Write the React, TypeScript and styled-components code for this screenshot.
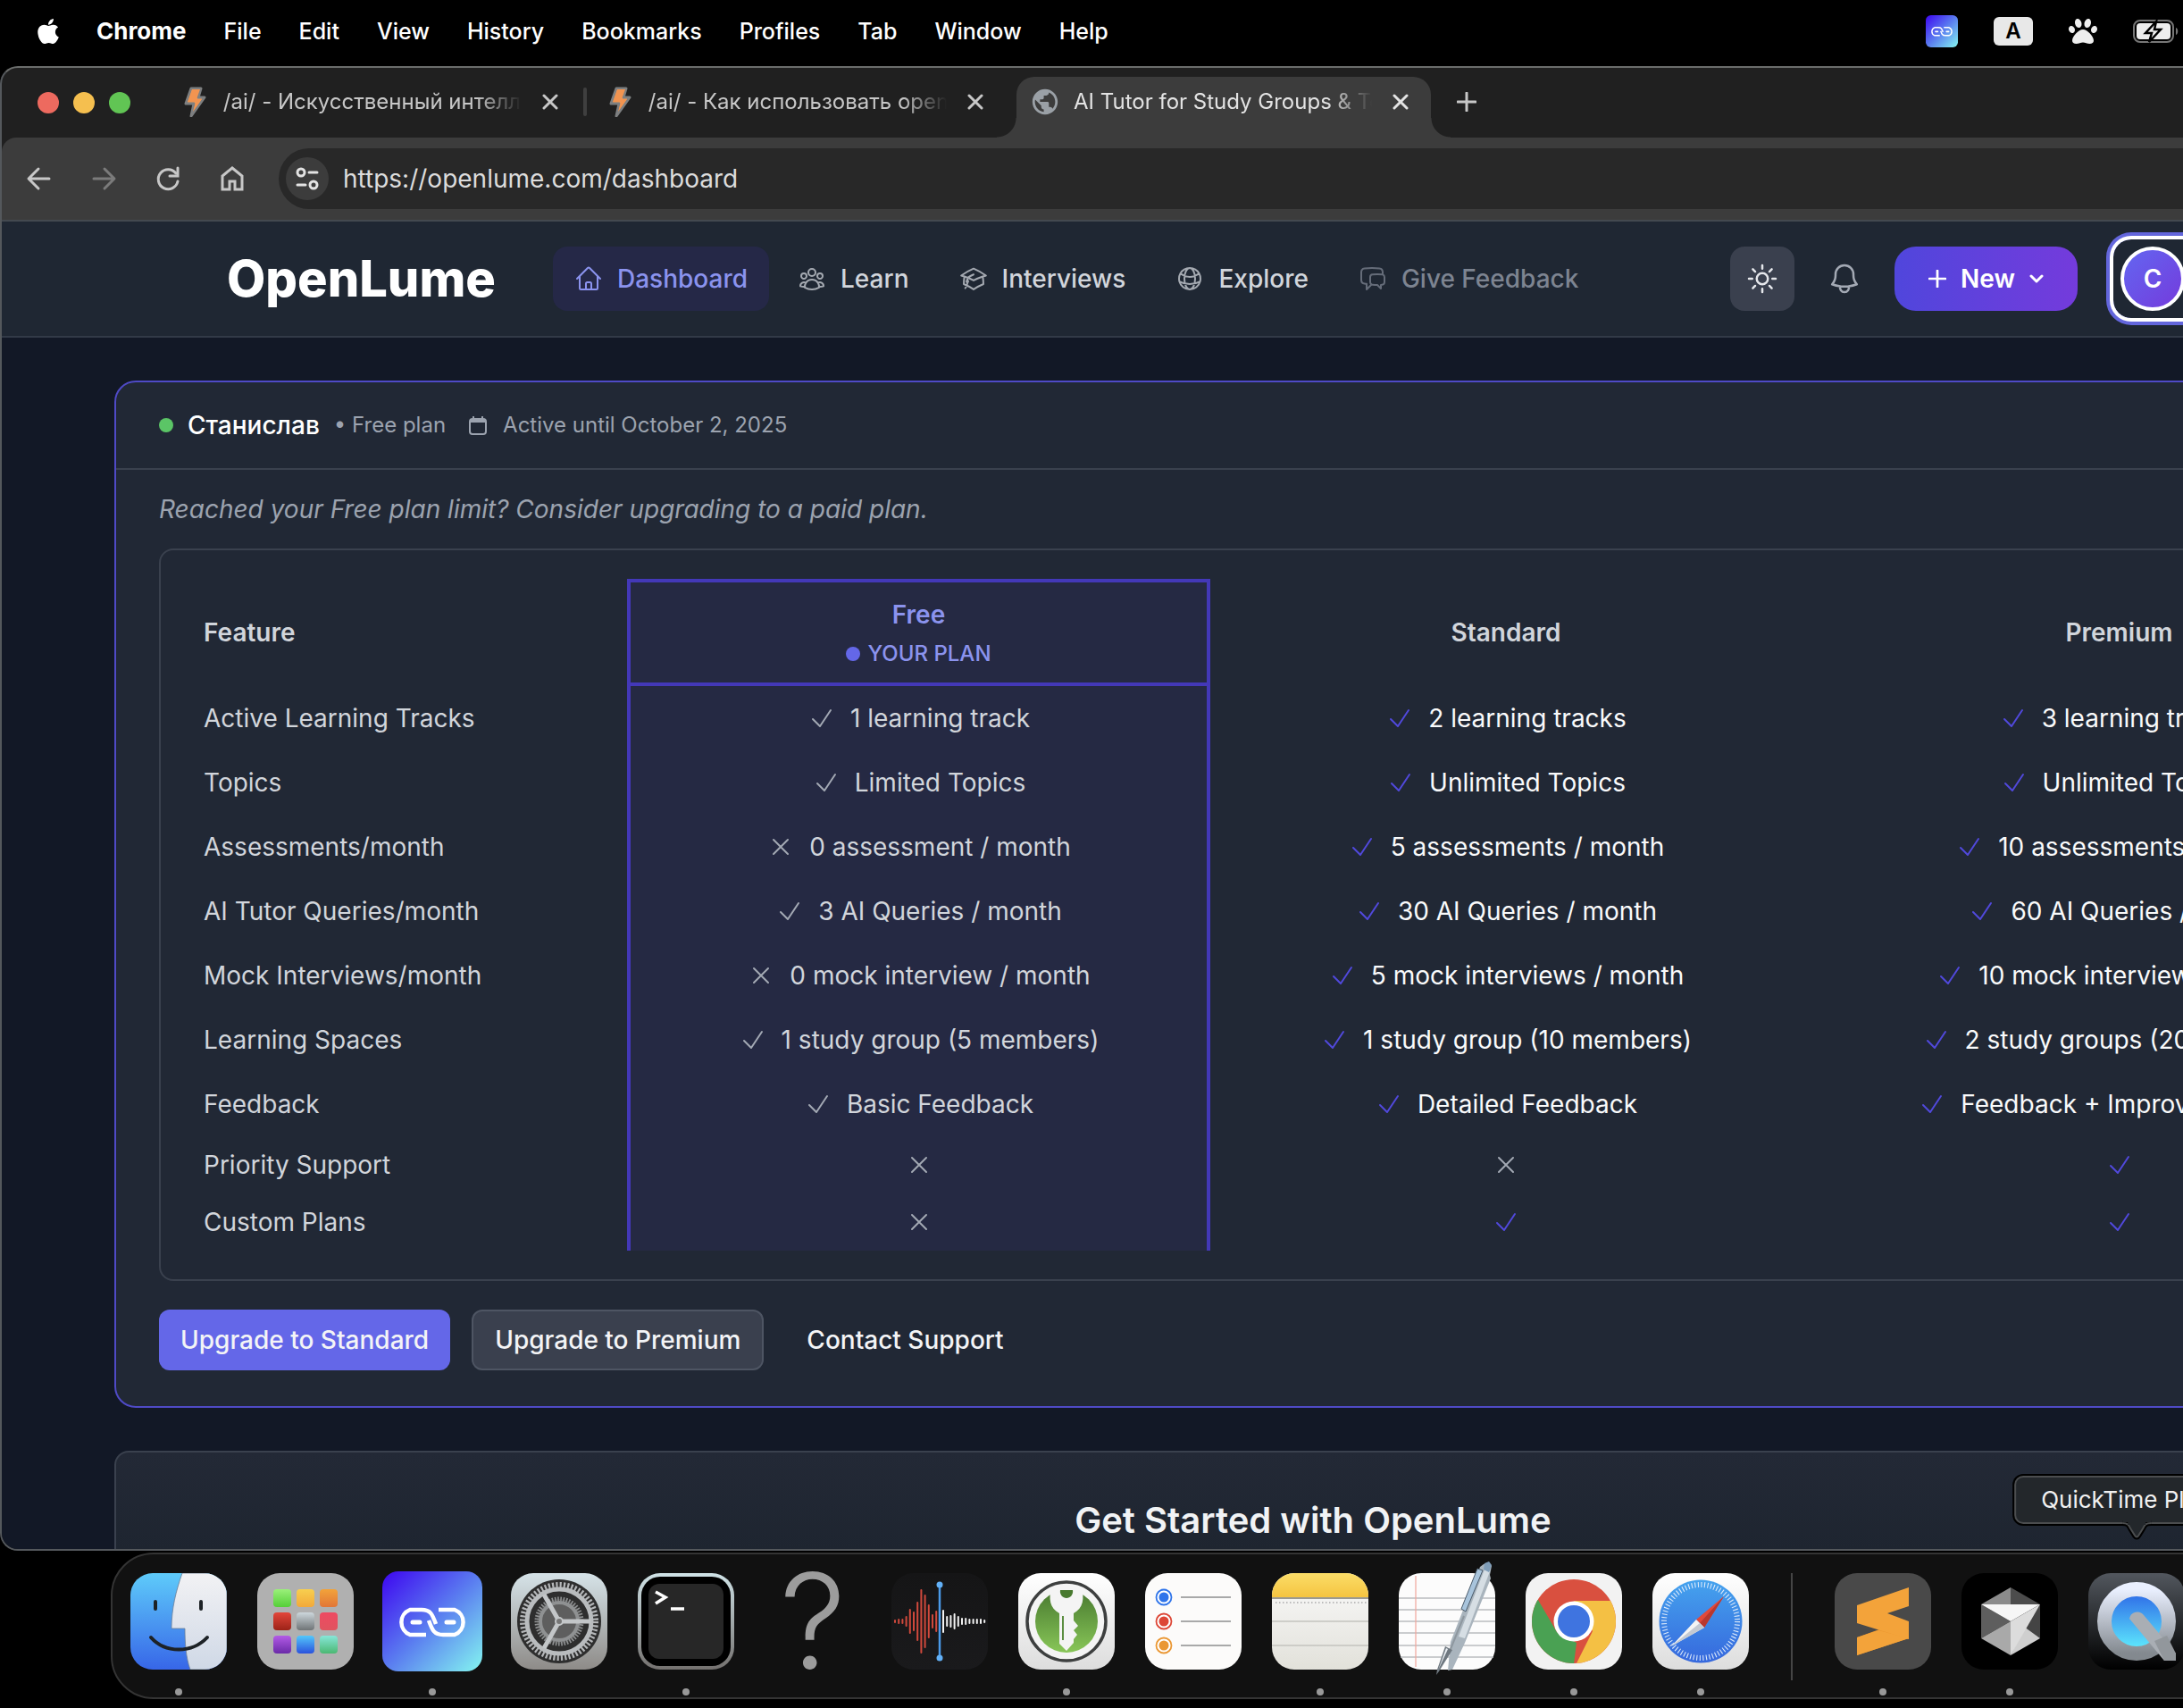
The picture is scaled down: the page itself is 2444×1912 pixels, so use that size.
import React from "react";
import styled, { createGlobalStyle, css } from "styled-components";
import { FaApple, FaPaw } from "react-icons/fa";
import { MdPublic } from "react-icons/md";
import {
  HiOutlineHome,
  HiOutlineUserGroup,
  HiOutlineAcademicCap,
  HiOutlineGlobeAlt,
  HiOutlineChatBubbleLeftRight,
  HiOutlineSun,
  HiOutlineBell,
  HiOutlineCheck,
  HiOutlineXMark,
} from "react-icons/hi2";

const GlobalStyle = createGlobalStyle`
  *, *::before, *::after { box-sizing: border-box; }
  body {
    margin: 0;
    background: #000;
    color: #fff;
    font-family: Inter, "Noto Sans", sans-serif;
    overflow: hidden;
  }
  button, input { font: inherit; color: inherit; }
  button { margin: 0; padding: 0; border: 0; background: none; cursor: pointer; }
  a { color: inherit; text-decoration: none; }
  svg { display: block; flex: none; }
`;

/* ---------- desktop ---------- */

const Screen = styled.div`
  display: flex;
  flex-direction: column;
  min-width: 2940px;
  height: 100vh;
`;

const MenuBar = styled.header`
  display: flex;
  align-items: center;
  flex: none;
  height: 74px;
  padding: 0 500px 4px 38px;
`;

const MenuList = styled.nav`
  display: flex;
  align-items: center;
  gap: 42px;
  line-height: 32px;
`;

const MenuItem = styled.button<{ $bold?: boolean }>`
  font-size: ${(p) => (p.$bold ? 26 : 25)}px;
  font-weight: ${(p) => (p.$bold ? 700 : 500)};
`;

const AppleMenu = styled.button`
  width: 28px;
`;

const StatusIcons = styled.div`
  display: flex;
  align-items: center;
  gap: 40px;
  margin-left: auto;
`;

const InputBadge = styled.span`
  display: grid;
  place-items: center;
  width: 44px;
  height: 32px;
  border-radius: 6px;
  background: #e8e8e8;
  color: #000;
  font-size: 24px;
  line-height: 32px;
  font-weight: 600;
`;

/* ---------- browser window ---------- */

const Window = styled.section`
  display: flex;
  flex-direction: column;
  flex: 1;
  min-height: 0;
  overflow: hidden;
  border: 2px solid #54585c;
  border-top-color: #6b6d6c;
  border-radius: 20px;
  background: #202020;
`;

const TabStrip = styled.div`
  display: flex;
  align-items: flex-end;
  flex: none;
  height: 78px;
  padding-left: 40px;
`;

const Lights = styled.div`
  display: flex;
  align-items: center;
  gap: 16px;
  height: 78px;
  margin-right: 40px;
`;

const Light = styled.button<{ $color: string }>`
  width: 24px;
  height: 24px;
  border-radius: 50%;
  background: ${(p) => p.$color};
`;

const Tabs = styled.div`
  display: flex;
  gap: 12px;
`;

const TabBox = styled.div<{ $active?: boolean; $divider?: boolean }>`
  position: relative;
  display: flex;
  align-items: center;
  width: 464px;
  height: 68px;
  padding: 0 18px 12px 18px;
  border-radius: 20px 20px 0 0;
  color: ${(p) => (p.$active ? "#e3e3e3" : "#c7c7c7")};
  ${(p) =>
    p.$active &&
    css`
      background: #3c3c3c;
      &::before,
      &::after {
        content: "";
        position: absolute;
        bottom: 0;
        width: 22px;
        height: 22px;
      }
      &::before {
        right: 100%;
        background: radial-gradient(circle at 0 0, transparent 21px, #3c3c3c 22px);
      }
      &::after {
        left: 100%;
        background: radial-gradient(circle at 100% 0, transparent 21px, #3c3c3c 22px);
      }
    `}
  ${(p) =>
    p.$divider &&
    css`
      &::after {
        content: "";
        position: absolute;
        left: calc(100% + 3px);
        top: 12px;
        width: 4px;
        height: 32px;
        border-radius: 2px;
        background: #3f3f3f;
      }
    `}
`;

const TabIcon = styled.span`
  display: flex;
  justify-content: center;
  width: 28px;
  margin-right: 18px;
`;

const TabTitle = styled.button`
  width: 336px;
  overflow: hidden;
  white-space: nowrap;
  text-align: left;
  font-size: 24px;
  line-height: 32px;
  mask-image: linear-gradient(to right, #000 85%, transparent);
`;

const TabClose = styled.button`
  display: grid;
  place-items: center;
  width: 32px;
  height: 32px;
  margin-left: 16px;
`;

const NewTab = styled(TabClose)`
  margin: 0 0 24px 24px;
  color: #c7c7c7;
`;

const Toolbar = styled.div`
  display: flex;
  align-items: center;
  flex: none;
  gap: 36px;
  height: 94px;
  padding: 0 24px 0 26px;
  border-bottom: 2px solid #434950;
  border-radius: 16px 16px 0 0;
  background: #3c3c3c;
  color: #c7c7c7;
`;

const ToolGroup = styled.div`
  display: flex;
  gap: 40px;
`;

const ToolButton = styled.button<{ $dim?: boolean }>`
  color: ${(p) => (p.$dim ? "#7b7b7b" : "#c7c7c7")};
`;

const Omnibox = styled.label`
  display: flex;
  align-items: center;
  flex: 1;
  gap: 16px;
  height: 68px;
  padding-left: 8px;
  border-radius: 34px;
  background: #282828;
`;

const SiteInfo = styled.span`
  display: grid;
  place-items: center;
  width: 48px;
  height: 48px;
  border-radius: 50%;
  background: #3c3c3c;
  color: #e3e3e3;
`;

const UrlInput = styled.input`
  flex: 1;
  padding: 0;
  border: 0;
  outline: 0;
  background: none;
  color: #dcdcdc;
  font-size: 28px;
  line-height: 40px;
`;

/* ---------- site header ---------- */

const SiteHeader = styled.header`
  flex: none;
  border-bottom: 2px solid #323a47;
  background: #1f2733;
`;

const HeaderInner = styled.div`
  display: flex;
  align-items: center;
  width: 100%;
  max-width: 2560px;
  height: 128px;
  margin: 0 auto;
  padding: 0 64px;
`;

const Logo = styled.a`
  margin-right: 64px;
  font-size: 56px;
  line-height: 72px;
  font-weight: 800;
`;

const Nav = styled.nav`
  display: flex;
  gap: 8px;
`;

const NavLink = styled.a<{ $tone: "active" | "normal" | "muted" }>`
  display: flex;
  align-items: center;
  gap: 16px;
  height: 72px;
  padding: 0 24px;
  border-radius: 16px;
  font-size: 28px;
  line-height: 40px;
  font-weight: 500;
  background: ${(p) => (p.$tone === "active" ? "#252847" : "none")};
  color: ${(p) => ({ active: "#8b93ee", normal: "#d1d5db", muted: "#7d8491" })[p.$tone]};
  svg {
    opacity: ${(p) => (p.$tone === "active" ? 1 : 0.75)};
  }
`;

const HeaderActions = styled.div`
  display: flex;
  align-items: center;
  gap: 20px;
  margin-left: auto;
`;

const IconButton = styled.button<{ $filled?: boolean }>`
  display: grid;
  place-items: center;
  width: 72px;
  height: 72px;
  border-radius: 16px;
  background: ${(p) => (p.$filled ? "#3a404e" : "none")};
  color: ${(p) => (p.$filled ? "#e5e7eb" : "#a3a9b4")};
`;

const NewButton = styled.button`
  display: flex;
  align-items: center;
  gap: 16px;
  height: 72px;
  padding: 0 38px;
  border-radius: 24px;
  background: linear-gradient(to right, #5046dc, #743bdc);
  font-size: 28px;
  line-height: 40px;
  font-weight: 600;
`;

const AccountButton = styled.button`
  display: flex;
  align-items: center;
  gap: 16px;
  width: 320px;
  height: 88px;
  margin-left: 20px;
  padding: 8px;
  border-radius: 20px;
  box-shadow: 0 0 0 4px #fff, 0 0 0 8px #6366dc;
  font-size: 28px;
  line-height: 40px;
  font-weight: 500;
`;

const Avatar = styled.span`
  display: grid;
  place-items: center;
  width: 72px;
  height: 72px;
  border: 4px solid #fff;
  border-radius: 50%;
  background: linear-gradient(135deg, #6366f1, #743bdc);
  font-size: 28px;
  font-weight: 600;
`;

/* ---------- dashboard ---------- */

const Page = styled.main`
  display: flex;
  flex-direction: column;
  flex: 1;
  gap: 48px;
  min-height: 0;
  padding: 48px 126px 0;
  overflow: hidden;
  background: #121826;
`;

const PlanCard = styled.section`
  flex: none;
  border: 2px solid #4f4ac6;
  border-radius: 24px;
  background: #212835;
`;

const PlanHeader = styled.div`
  display: flex;
  align-items: center;
  height: 98px;
  padding: 0 48px;
  border-bottom: 2px solid #3a414e;
  font-size: 24px;
  line-height: 32px;
  color: #9ca3af;
`;

const Dot = styled.span<{ $color: string }>`
  width: 16px;
  height: 16px;
  border-radius: 50%;
  background: ${(p) => p.$color};
`;

const UserName = styled.strong`
  margin: 0 16px;
  color: #fff;
  font-size: 28px;
  line-height: 40px;
  font-weight: 500;
`;

const PlanName = styled.span`
  margin-right: 24px;
`;

const ActiveUntil = styled.span`
  display: flex;
  align-items: center;
  gap: 16px;
`;

const PlanBody = styled.div`
  padding: 24px 48px 40px;
`;

const Hint = styled.p`
  margin: 0 0 24px;
  color: #9ca3af;
  font-size: 28px;
  line-height: 40px;
  font-style: italic;
`;

const TableFrame = styled.div`
  padding: 32px;
  border: 2px solid #3a414e;
  border-radius: 16px;
`;

const PlanTable = styled.table`
  width: 100%;
  table-layout: fixed;
  border-collapse: separate;
  border-spacing: 0;
  font-size: 28px;
  line-height: 40px;
`;

const Col = styled.col<{ $share: number }>`
  width: ${(p) => p.$share}px;
`;

const currentPlan = css`
  border: 0 solid #4338b8;
  border-left-width: 4px;
  border-right-width: 4px;
  background: #252943;
`;

const HeadCell = styled.th<{ $current?: boolean; $left?: boolean }>`
  height: 120px;
  padding: 0 16px;
  text-align: ${(p) => (p.$left ? "left" : "center")};
  font-weight: 600;
  color: ${(p) => (p.$current ? "#8b93ee" : "#d1d5db")};
  ${(p) =>
    p.$current &&
    css`
      ${currentPlan}
      border-top-width: 4px;
      border-bottom-width: 4px;
    `}
`;

const YourPlan = styled.span`
  display: flex;
  align-items: center;
  justify-content: center;
  gap: 8px;
  margin-top: 8px;
  font-size: 24px;
  line-height: 32px;
  font-weight: 500;
`;

const FeatureCell = styled.th`
  padding: 0 16px;
  text-align: left;
  font-weight: 400;
  color: #d1d5db;
`;

const ValueCell = styled.td<{ $current?: boolean; $short?: boolean }>`
  height: ${(p) => (p.$short ? 64 : 72)}px;
  padding: 0 16px;
  color: ${(p) => (p.$current ? "#d1d5db" : "#f9fafb")};
  ${(p) => p.$current && currentPlan}
`;

const Value = styled.div<{ $accent: boolean }>`
  display: flex;
  align-items: center;
  justify-content: center;
  gap: 16px;
  white-space: nowrap;
  svg {
    color: ${(p) => (p.$accent ? "#5149dc" : "#a3a9b4")};
  }
`;

const Actions = styled.div`
  display: flex;
  gap: 24px;
  margin-top: 32px;
`;

const ActionButton = styled.button<{ $kind: "primary" | "secondary" | "plain" }>`
  height: 68px;
  padding: 0 24px;
  border: ${(p) => (p.$kind === "secondary" ? "2px solid #4e5563" : "0")};
  border-radius: 12px;
  background: ${(p) => ({ primary: "#6467e8", secondary: "#3a404e", plain: "none" })[p.$kind]};
  color: #f3f4f6;
  font-size: 28px;
  line-height: 40px;
  font-weight: 500;
`;

const StartCard = styled.section`
  flex: none;
  height: 240px;
  padding: 48px;
  border: 2px solid #3a414e;
  border-radius: 16px;
  background: linear-gradient(#232936, #1e2530 110px);
  text-align: center;
`;

const StartTitle = styled.h2`
  margin: 0;
  font-size: 40px;
  line-height: 56px;
  font-weight: 600;
  color: #f1f3f5;
`;

/* ---------- dock ---------- */

const DockArea = styled.footer`
  flex: none;
  height: 176px;
  padding: 2px 124px 10px;
`;

const DockBar = styled.div`
  display: flex;
  align-items: flex-start;
  gap: 34px;
  height: 164px;
  padding: 21px 20px 0;
  border: 2px solid #343434;
  border-radius: 48px;
  background: #111;
`;

const DockItem = styled.button<{ $running?: boolean }>`
  position: relative;
  display: grid;
  place-content: center;
  width: 108px;
  height: 108px;
  svg {
    overflow: visible;
  }
  ${(p) =>
    p.$running &&
    css`
      &::after {
        content: "";
        position: absolute;
        left: 50px;
        top: 129px;
        width: 8px;
        height: 8px;
        border-radius: 50%;
        background: #999;
      }
    `}
`;

const DockDivider = styled.span`
  width: 2px;
  height: 120px;
  margin: 0 13px;
  background: #454545;
`;

const MissingApp = styled.span`
  display: block;
  color: #9c9c9c;
  font-size: 148px;
  line-height: 108px;
  font-weight: 300;
`;

const Tooltip = styled.span`
  position: absolute;
  left: 50%;
  bottom: 163px;
  transform: translateX(-50%);
  padding: 8px 28px;
  border: 2px solid #4b4d4f;
  border-radius: 10px;
  box-shadow: 0 0 0 2px #000;
  background: #23272b;
  white-space: nowrap;
  color: #f1f1f1;
  font-size: 26px;
  line-height: 34px;
`;

const TooltipArrow = styled.svg`
  position: absolute;
  left: 50%;
  top: 100%;
  margin-left: -20px;
`;

/* ---------- drawings ---------- */

const stroke = (w: number) => ({
  fill: "none",
  stroke: "currentColor",
  strokeWidth: w,
  strokeLinecap: "round" as const,
  strokeLinejoin: "round" as const,
});

const BoltIcon = () => (
  <svg width="26" height="34" viewBox="0 0 26 34">
    <path d="M9 2h11l-3 10h7L9 33l3-14H3z" fill="#ee9a58" stroke="#7d7f80" strokeWidth="3" strokeLinejoin="round" />
    <path d="M10 3h9l-4 11h6L11 28l3-11H5z" fill="#f29450" />
  </svg>
);

const CloseIcon = () => (
  <svg width="18" height="18" viewBox="0 0 18 18" {...stroke(3)}>
    <path d="M2 2l14 14M16 2L2 16" />
  </svg>
);

const PlusIcon = ({ size }: { size: number }) => (
  <svg width={size} height={size} viewBox="0 0 22 22" {...stroke(3)}>
    <path d="M11 1v20M1 11h20" />
  </svg>
);

const LinkGlyph = () => (
  <g fill="none" stroke="#fff" strokeWidth="4.5">
    <path d="M49 71H31a15 15 0 010-28h13c10 0 12 5 16 16" strokeLinecap="butt" />
    <path d="M63 43h18a15 15 0 010 28H68c-10 0-12-5-16-16" />
    <path d="M34 57h8M72 57h8" strokeWidth="5" strokeLinecap="round" />
  </g>
);

const LinkApp = ({ id, size }: { id: string; size: number }) => (
  <svg width={size} height={size} viewBox="0 0 112 112">
    <defs>
      <linearGradient id={id} x1="0" y1="0" x2="1" y2="1">
        <stop offset="0" stopColor="#3d05f0" />
        <stop offset=".5" stopColor="#5a7cf0" />
        <stop offset="1" stopColor="#84f6f0" />
      </linearGradient>
    </defs>
    <rect width="112" height="112" rx="18" fill={`url(#${id})`} />
    <LinkGlyph />
  </svg>
);

const BatteryIcon = () => (
  <svg width="52" height="26" viewBox="0 0 52 26">
    <rect x="1" y="1" width="44" height="24" rx="7" fill="none" stroke="#777" strokeWidth="2" />
    <rect x="4" y="4" width="38" height="18" rx="4" fill="#eee" />
    <path d="M48 9c3 1 3 7 0 8z" fill="#777" />
    <path d="M26 2L14 15h7l-3 10 13-14h-7z" fill="#eee" stroke="#000" strokeWidth="2.5" />
  </svg>
);

const ArrowIcon = ({ flip }: { flip?: boolean }) => (
  <svg width="32" height="32" viewBox="0 0 32 32" {...stroke(3)}>
    {flip ? <path d="M5 16h22M17 5l11 11-11 11" /> : <path d="M27 16H5M15 5L4 16l11 11" />}
  </svg>
);

const ReloadIcon = () => (
  <svg width="32" height="32" viewBox="0 0 32 32" {...stroke(3)} strokeLinejoin="miter">
    <path d="M25 10a11 11 0 10 2 9" />
    <path d="M27 4v9h-9" />
  </svg>
);

const HouseIcon = () => (
  <svg width="32" height="32" viewBox="0 0 32 32" {...stroke(3)} strokeLinejoin="miter">
    <path d="M5 28V13l11-9 11 9v15h-8v-9h-6v9z" />
  </svg>
);

const TuneIcon = () => (
  <svg width="28" height="28" viewBox="0 0 28 28" {...stroke(3)}>
    <circle cx="7" cy="7" r="4" />
    <circle cx="21" cy="21" r="4" />
    <path d="M16 7h9M3 21h9" />
  </svg>
);

const CalendarIcon = () => (
  <svg width="24" height="24" viewBox="0 0 24 24">
    <rect x="3" y="5" width="18" height="17" rx="3" fill="none" stroke="#9ca3af" strokeWidth="2" />
    <path d="M3 9V7a2 2 0 012-2h14a2 2 0 012 2v2zM6 2h2v3H6zM16 2h2v3h-2z" fill="#9ca3af" />
  </svg>
);

const ChevronIcon = () => (
  <svg width="16" height="16" viewBox="0 0 16 16" {...stroke(3)}>
    <path d="M2 5l6 6 6-6" />
  </svg>
);

const Defs = () => (
  <svg width="0" height="0" style={{ position: "absolute" }} aria-hidden="true">
    <defs>
      {[
        ["finderBlue", "#5ecbfa", "#3766e8"],
        ["finderWhite", "#f2f2f4", "#cfd8e6"],
        ["gear", "#d6e3e8", "#8e8b88"],
        ["termEdge", "#cfe2e6", "#74716f"],
        ["paper", "#ffffff", "#dddddd"],
        ["keyGreen", "#48792f", "#88c658"],
        ["noteYellow", "#fbdd68", "#f5c440"],
        ["notePaper", "#fafafa", "#e2e1da"],
        ["memo", "#151516", "#1a1a1c"],
        ["safari", "#45a3ee", "#3668dd"],
        ["qtBg", "#52575e", "#000000"],
        ["qtRing", "#eaf0ff", "#83898f"],
        ["qtBlue", "#2b63e6", "#62f4ff"],
        ["lpGreen", "#9bf07a", "#55cf38"],
        ["lpYellow", "#f8cf4f", "#f2a93a"],
        ["lpOrange", "#f2a33a", "#e17637"],
        ["lpRed", "#e3463a", "#9c2318"],
        ["lpGray", "#cdd7dc", "#6f7476"],
        ["lpPink", "#ee4a62", "#e0545f"],
        ["lpPurple", "#b35be6", "#6a2aa8"],
        ["lpBlue", "#53c7fb", "#2b52dd"],
        ["lpTeal", "#87e6d8", "#4bb873"],
      ].map(([id, from, to]) => (
        <linearGradient key={id} id={id} x1="0" y1="0" x2="0" y2="1">
          <stop offset="0" stopColor={from} />
          <stop offset="1" stopColor={to} />
        </linearGradient>
      ))}
      <clipPath id="tile">
        <rect width="108" height="108" rx="25" />
      </clipPath>
      <clipPath id="chromeDisc">
        <circle cx="54" cy="54" r="47" />
      </clipPath>
    </defs>
  </svg>
);

const Tile = ({ fill, children }: { fill: string; children?: React.ReactNode }) => (
  <svg width="108" height="108" viewBox="0 0 108 108">
    <rect width="108" height="108" rx="25" fill={fill} />
    {children}
  </svg>
);

const Finder = () => (
  <Tile fill="url(#finderBlue)">
    <g clipPath="url(#tile)">
      <path d="M58 0C51 20 46 40 46 62h15c0 16 1 32 6 46h41V0z" fill="url(#finderWhite)" stroke="#6c7f95" strokeWidth=".8" />
    </g>
    <g fill="none" stroke="#1d2226" strokeWidth="4" strokeLinecap="round">
      <path d="M28 32v8M79 32v8M23 72c16 18 46 18 63 0" />
    </g>
  </Tile>
);

const Launchpad = () => (
  <Tile fill="#b0b0b0">
    {["lpGreen", "lpYellow", "lpOrange", "lpRed", "lpGray", "lpPink", "lpPurple", "lpBlue", "lpTeal"].map((c, i) => (
      <rect key={c} x={18 + (i % 3) * 26} y={18 + Math.floor(i / 3) * 26} width="20" height="20" rx="4" fill={`url(#${c})`} />
    ))}
  </Tile>
);

const Settings = () => (
  <Tile fill="url(#gear)">
    <circle cx="54" cy="54" r="47" fill="#2e2e2e" />
    <circle cx="54" cy="54" r="41" fill="none" stroke="#b4b6b8" strokeWidth="6" strokeDasharray="2.2 2.1" />
    <circle cx="54" cy="54" r="36" fill="none" stroke="#b9bcbe" strokeWidth="5" />
    <circle cx="54" cy="54" r="25" fill="#4c4c4c" stroke="#8f9192" strokeWidth="5" strokeDasharray="1.6 1.6" />
    <circle cx="54" cy="54" r="21" fill="#5e5e5e" stroke="#8f9192" strokeWidth="4" />
    <g stroke="#c3c6c8" strokeWidth="5">
      <path d="M54 54h35M54 54L37 24M54 54L37 84" />
    </g>
    <circle cx="54" cy="54" r="4" fill="#777" stroke="#c3c6c8" strokeWidth="2" />
  </Tile>
);

const Terminal = () => (
  <Tile fill="url(#termEdge)">
    <rect x="4" y="4" width="100" height="100" rx="21" fill="#000" />
    <rect x="12" y="12" width="84" height="84" rx="12" fill="#272727" />
    <path d="M20 21l11 6-11 7" fill="none" stroke="#fff" strokeWidth="3.5" />
    <path d="M37 40h15" stroke="#fff" strokeWidth="3.5" />
  </Tile>
);

const RED_BARS = [1, 2, 2, 5, 13, 10, 21, 35, 29, 18, 7, 11];
const WHITE_BARS = [12, 5, 6, 8, 5, 3, 3, 2, 2, 2, 2, 1];

const VoiceMemos = () => (
  <Tile fill="url(#memo)">
    <g strokeWidth="2" strokeLinecap="round">
      {RED_BARS.map((h, i) => (
        <path key={i} stroke="#d0493c" d={`M${4 + i * 4.2} ${54 - h}v${h * 2}`} />
      ))}
      {WHITE_BARS.map((h, i) => (
        <path key={i} stroke="#f2f2f2" d={`M${58 + i * 4.2} ${54 - h}v${h * 2}`} />
      ))}
    </g>
    <path d="M54 12v83" stroke="#4a9ae8" strokeWidth="2.5" />
    <circle cx="54" cy="13" r="3.5" fill="#62b0f6" />
    <circle cx="54" cy="95" r="3.5" fill="#62b0f6" />
  </Tile>
);

const KeePass = () => (
  <Tile fill="url(#paper)">
    <circle cx="54" cy="54" r="44" fill="#f4f4f4" stroke="#3d3f3f" strokeWidth="3.5" />
    <circle cx="54" cy="54" r="35" fill="url(#keyGreen)" />
    <path d="M37 17h34c3 11 2 22-9 28v8l5 6-5 5 4 5-4 5v4l-8 9-8-8V45C35 39 34 28 37 17z" fill="#f4f4f4" />
    <path d="M47 19h14c1 5-3 9-7 9s-8-4-7-9z" fill="#48792f" />
    <path d="M50 48v27" stroke="#5b8d40" strokeWidth="2" />
  </Tile>
);

const Reminders = () => (
  <Tile fill="#fcfbfa">
    {["#2f74ea", "#dd4636", "#ea9733"].map((c, i) => (
      <g key={c}>
        <circle cx="21" cy={27 + i * 27} r="8.5" fill="#fff" stroke={c} strokeWidth="1.8" />
        <circle cx="21" cy={27 + i * 27} r="5.5" fill={c} />
        <path d={`M40 ${27 + i * 27}h56`} stroke="#a9a9a9" strokeWidth="2" />
      </g>
    ))}
  </Tile>
);

const Notes = () => (
  <Tile fill="url(#notePaper)">
    <g clipPath="url(#tile)">
      <rect width="108" height="27" fill="url(#noteYellow)" />
      <path d="M0 28h108" stroke="#9c9a90" strokeWidth="2" />
      <path d="M4 33h104" stroke="#aaa" strokeWidth="1.5" strokeDasharray="1.5 2.5" />
      <path d="M0 54h108M0 81h108" stroke="#c4c3be" strokeWidth="1.5" />
    </g>
  </Tile>
);

const TextEdit = () => (
  <Tile fill="#fcfcfc">
    <path d="M0 28h108M0 41h108M0 54h108M0 67h108M0 81h108M2 94h104" stroke="#b9bcbf" strokeWidth="1.5" />
    <path d="M19 3v102" stroke="#f0a59c" strokeWidth="1.2" />
    <path d="M95-10l6-2 3 4-2 10 1 4-29 72-14 30-5 1 3-32 33-84z" fill="#a9b4bd" />
    <path d="M96-4l6 2-28 75-7-2z" fill="#d6dee4" />
    <path d="M88-5l6 2-19 46-5-3z" fill="#a8c4dc" stroke="#4a5a6a" strokeWidth="1" />
    <path d="M96-11l5-2 3 4-3 8-6-3z" fill="#7f9db8" />
    <path d="M73 48l-15 37" stroke="#8d979f" strokeWidth="2" />
    <path d="M52 82l8 4-15 24-3 4 1-6z" fill="#6f7880" />
    <path d="M53 84l2 1-11 24z" fill="#e9eef2" />
  </Tile>
);

const Chrome = () => (
  <Tile fill="#f2f2f2">
    <g clipPath="url(#chromeDisc)">
      <rect width="108" height="108" fill="#d9503f" />
      <path d="M14 30l21 36 22 12-5 40H0V30z" fill="#4aa153" />
      <path d="M54 31h60v80H52l23-46z" fill="#f4c044" />
    </g>
    <circle cx="54" cy="54" r="22.5" fill="#fff" />
    <circle cx="54" cy="54" r="18" fill="#3f74e0" />
  </Tile>
);

const Safari = () => (
  <Tile fill="url(#paper)">
    <circle cx="54" cy="54" r="46.5" fill="url(#safari)" />
    <circle cx="54" cy="54" r="41" fill="none" stroke="#dbe9fa" strokeWidth="6" strokeDasharray="1.1 2.48" />
    <path d="M80 26L58 61l-9-9z" fill="#e1493b" />
    <path d="M80 26L58 61l-5-5z" fill="#b8382f" />
    <path d="M21 82l28-30 9 9z" fill="#f4f4f4" />
    <path d="M21 82l32-26 5 5z" fill="#c3c9d2" />
  </Tile>
);

const Sublime = () => (
  <Tile fill="#494949">
    <path d="M50 63l33-9v19l-58 19V72z" fill="#e8932c" />
    <path d="M83 16L25 36v20l58 18V54l-24-9 24-8z" fill="#f3a33a" />
    <path d="M25 72l24-8 34 9-58 19z" fill="#f3a33a" />
  </Tile>
);

const Cursor = () => (
  <Tile fill="#000">
    <path d="M55 16L22 35h33z" fill="#8b8b8b" />
    <path d="M55 16l33 19H55z" fill="#4c4c4c" />
    <path d="M22 35l33 19-33 19z" fill="#5e5e5e" />
    <path d="M22 73l33-19v38z" fill="#a9a9a9" />
    <path d="M88 35v38L70 62z" fill="#444" />
    <path d="M70 60l18 13-33 19z" fill="#cfcfcf" />
    <path d="M22 35h66L55 54z" fill="#f6f6f6" />
    <path d="M88 35L55 54v38z" fill="#dcdcdc" />
  </Tile>
);

const QuickTime = () => (
  <Tile fill="url(#qtBg)">
    <circle cx="54" cy="54" r="36" fill="url(#qtBlue)" stroke="url(#qtRing)" strokeWidth="16" />
    <path d="M46 51a9 9 0 0116-4l36 43v8H85z" fill="#a9aeb4" />
    <path d="M74 76l14-6 10 20v8H85z" fill="#92979c" />
  </Tile>
);

/* ---------- data ---------- */

const MENUS = ["File", "Edit", "View", "History", "Bookmarks", "Profiles", "Tab", "Window", "Help"];

const NAV = [
  { label: "Dashboard", Icon: HiOutlineHome, tone: "active" as const },
  { label: "Learn", Icon: HiOutlineUserGroup, tone: "normal" as const },
  { label: "Interviews", Icon: HiOutlineAcademicCap, tone: "normal" as const },
  { label: "Explore", Icon: HiOutlineGlobeAlt, tone: "normal" as const },
  { label: "Give Feedback", Icon: HiOutlineChatBubbleLeftRight, tone: "muted" as const },
];

type Cell = [boolean, string?];

const ROWS: { feature: string; cells: Cell[] }[] = [
  { feature: "Active Learning Tracks", cells: [[true, "1 learning track"], [true, "2 learning tracks"], [true, "3 learning tracks"]] },
  { feature: "Topics", cells: [[true, "Limited Topics"], [true, "Unlimited Topics"], [true, "Unlimited Topics"]] },
  { feature: "Assessments/month", cells: [[false, "0 assessment / month"], [true, "5 assessments / month"], [true, "10 assessments / month"]] },
  { feature: "AI Tutor Queries/month", cells: [[true, "3 AI Queries / month"], [true, "30 AI Queries / month"], [true, "60 AI Queries / month"]] },
  { feature: "Mock Interviews/month", cells: [[false, "0 mock interview / month"], [true, "5 mock interviews / month"], [true, "10 mock interviews / month"]] },
  { feature: "Learning Spaces", cells: [[true, "1 study group (5 members)"], [true, "1 study group (10 members)"], [true, "2 study groups (20 members)"]] },
  { feature: "Feedback", cells: [[true, "Basic Feedback"], [true, "Detailed Feedback"], [true, "Feedback + Improvement Plan"]] },
  { feature: "Priority Support", cells: [[false], [false], [true]] },
  { feature: "Custom Plans", cells: [[false], [true], [true]] },
];

const DOCK: { name: string; art: React.ReactNode; running?: boolean; dividerBefore?: boolean; tip?: boolean }[] = [
  { name: "Finder", art: <Finder />, running: true },
  { name: "Launchpad", art: <Launchpad /> },
  { name: "Links", art: <LinkApp id="linkDock" size={112} />, running: true },
  { name: "System Settings", art: <Settings /> },
  { name: "Terminal", art: <Terminal />, running: true },
  { name: "Missing application", art: <MissingApp>?</MissingApp> },
  { name: "Voice Memos", art: <VoiceMemos /> },
  { name: "KeePassXC", art: <KeePass />, running: true },
  { name: "Reminders", art: <Reminders /> },
  { name: "Notes", art: <Notes />, running: true },
  { name: "TextEdit", art: <TextEdit />, running: true },
  { name: "Google Chrome", art: <Chrome />, running: true },
  { name: "Safari", art: <Safari />, running: true },
  { name: "Sublime Text", art: <Sublime />, running: true, dividerBefore: true },
  { name: "Cursor", art: <Cursor />, running: true },
  { name: "QuickTime Player", art: <QuickTime />, tip: true },
];

export default function App() {
  return (
    <Screen>
      <GlobalStyle />
      <Defs />
      <MenuBar>
        <MenuList aria-label="Menu bar">
          <AppleMenu aria-label="Apple menu">
            <FaApple size={32} />
          </AppleMenu>
          <MenuItem $bold>Chrome</MenuItem>
          {MENUS.map((m) => (
            <MenuItem key={m}>{m}</MenuItem>
          ))}
        </MenuList>
        <StatusIcons>
          <LinkApp id="linkMenu" size={36} />
          <InputBadge>A</InputBadge>
          <FaPaw size={32} color="#eee" />
          <BatteryIcon />
        </StatusIcons>
      </MenuBar>

      <Window aria-label="Browser">
        <TabStrip>
          <Lights>
            <Light $color="#ed6a5f" aria-label="Close window" />
            <Light $color="#f5bf4f" aria-label="Minimize window" />
            <Light $color="#61c554" aria-label="Zoom window" />
          </Lights>
          <Tabs>
            <TabBox $divider>
              <TabIcon><BoltIcon /></TabIcon>
              <TabTitle>/ai/ - Искусственный интеллект</TabTitle>
              <TabClose aria-label="Close tab"><CloseIcon /></TabClose>
            </TabBox>
            <TabBox>
              <TabIcon><BoltIcon /></TabIcon>
              <TabTitle>/ai/ - Как использовать openlume</TabTitle>
              <TabClose aria-label="Close tab"><CloseIcon /></TabClose>
            </TabBox>
            <TabBox $active>
              <TabIcon><MdPublic size={34} color="#9aa0a6" /></TabIcon>
              <TabTitle>AI Tutor for Study Groups &amp; Teams</TabTitle>
              <TabClose aria-label="Close tab"><CloseIcon /></TabClose>
            </TabBox>
          </Tabs>
          <NewTab aria-label="New tab"><PlusIcon size={22} /></NewTab>
        </TabStrip>

        <Toolbar>
          <ToolGroup>
            <ToolButton aria-label="Back"><ArrowIcon /></ToolButton>
            <ToolButton aria-label="Forward" $dim><ArrowIcon flip /></ToolButton>
            <ToolButton aria-label="Reload"><ReloadIcon /></ToolButton>
            <ToolButton aria-label="Home"><HouseIcon /></ToolButton>
          </ToolGroup>
          <Omnibox>
            <SiteInfo><TuneIcon /></SiteInfo>
            <UrlInput aria-label="Address" defaultValue="https://openlume.com/dashboard" />
          </Omnibox>
        </Toolbar>

        <SiteHeader>
          <HeaderInner>
            <Logo href="#">OpenLume</Logo>
            <Nav aria-label="Main">
              {NAV.map(({ label, Icon, tone }) => (
                <NavLink key={label} href="#" $tone={tone}>
                  <Icon size={32} />
                  {label}
                </NavLink>
              ))}
            </Nav>
            <HeaderActions>
              <IconButton $filled aria-label="Switch theme"><HiOutlineSun size={40} /></IconButton>
              <IconButton aria-label="Notifications"><HiOutlineBell size={40} /></IconButton>
              <NewButton>
                <PlusIcon size={20} />
                New
                <ChevronIcon />
              </NewButton>
              <AccountButton aria-label="Account">
                <Avatar>C</Avatar>
                Станислав
              </AccountButton>
            </HeaderActions>
          </HeaderInner>
        </SiteHeader>

        <Page>
          <PlanCard>
            <PlanHeader>
              <Dot $color="#5bc566" />
              <UserName>Станислав</UserName>
              <PlanName>• Free plan</PlanName>
              <ActiveUntil>
                <CalendarIcon />
                Active until October 2, 2025
              </ActiveUntil>
            </PlanHeader>
            <PlanBody>
              <Hint>Reached your Free plan limit? Consider upgrading to a paid plan.</Hint>
              <TableFrame>
                <PlanTable>
                  <colgroup>
                    <Col $share={490} />
                    <Col $share={653} />
                    <Col $share={662} />
                    <Col $share={711} />
                  </colgroup>
                  <thead>
                    <tr>
                      <HeadCell $left scope="col">Feature</HeadCell>
                      <HeadCell $current scope="col">
                        Free
                        <YourPlan>
                          <Dot $color="#6467e8" />
                          YOUR PLAN
                        </YourPlan>
                      </HeadCell>
                      <HeadCell scope="col">Standard</HeadCell>
                      <HeadCell scope="col">Premium</HeadCell>
                    </tr>
                  </thead>
                  <tbody>
                    {ROWS.map(({ feature, cells }) => (
                      <tr key={feature}>
                        <FeatureCell scope="row">{feature}</FeatureCell>
                        {cells.map(([ok, text], i) => (
                          <ValueCell key={i} $current={i === 0} $short={!text}>
                            <Value $accent={ok && i > 0}>
                              {ok ? <HiOutlineCheck size={32} /> : <HiOutlineXMark size={32} />}
                              {text}
                            </Value>
                          </ValueCell>
                        ))}
                      </tr>
                    ))}
                  </tbody>
                </PlanTable>
              </TableFrame>
              <Actions>
                <ActionButton $kind="primary">Upgrade to Standard</ActionButton>
                <ActionButton $kind="secondary">Upgrade to Premium</ActionButton>
                <ActionButton $kind="plain">Contact Support</ActionButton>
              </Actions>
            </PlanBody>
          </PlanCard>
          <StartCard>
            <StartTitle>Get Started with OpenLume</StartTitle>
          </StartCard>
        </Page>
      </Window>

      <DockArea>
        <DockBar>
          {DOCK.map(({ name, art, running, dividerBefore, tip }) => (
            <React.Fragment key={name}>
              {dividerBefore && <DockDivider />}
              <DockItem aria-label={name} $running={running}>
                {art}
                {tip && (
                  <Tooltip role="tooltip">
                    {name}
                    <TooltipArrow width="40" height="20" viewBox="0 0 40 20">
                      <path d="M4 1c6 0 7 2 9 6l5 8q2 3 4 0l5-8c2-4 3-6 9-6" fill="none" stroke="#000" strokeWidth="6" />
                      <path d="M4 1c6 0 7 2 9 6l5 8q2 3 4 0l5-8c2-4 3-6 9-6" fill="#23272b" stroke="#4b4d4f" strokeWidth="2" />
                      <path d="M4-2h32v2H4zM10 0h20v3H10z" fill="#23272b" />
                    </TooltipArrow>
                  </Tooltip>
                )}
              </DockItem>
            </React.Fragment>
          ))}
        </DockBar>
      </DockArea>
    </Screen>
  );
}
